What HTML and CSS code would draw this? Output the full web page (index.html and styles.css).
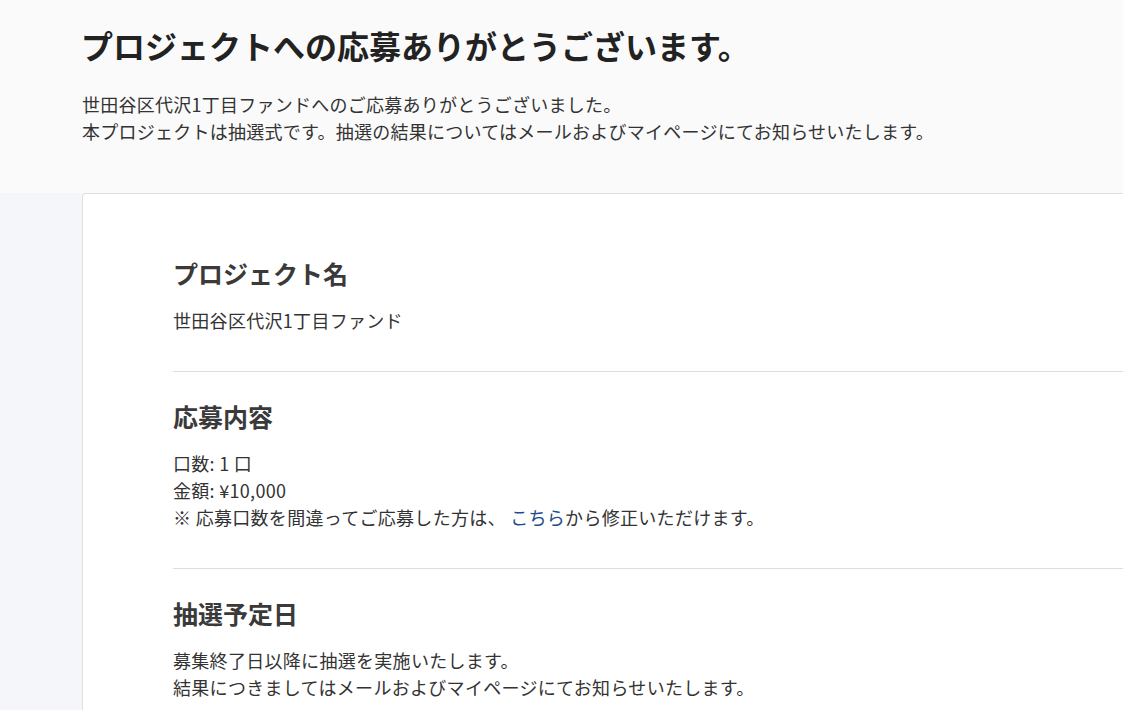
FILE: index.html
```html
<!DOCTYPE html>
<html lang="ja">
<head>
<meta charset="utf-8">
<title>応募完了</title>
<link rel="stylesheet" href="styles.css">
</head>
<body>
<header class="hero">
  <h1 class="hero-title">プロジェクトへの応募ありがとうございます。</h1>
  <p class="hero-text">世田谷区代沢1丁目ファンドへのご応募ありがとうございました。<br>本プロジェクトは抽選式です。抽選の結果についてはメールおよびマイページにてお知らせいたします。</p>
</header>
<main class="main">
  <div class="card">
    <section class="section section-first">
      <h2 class="section-title">プロジェクト名</h2>
      <p class="section-text">世田谷区代沢1丁目ファンド</p>
    </section>
    <section class="section">
      <h2 class="section-title">応募内容</h2>
      <p class="section-text">口数: 1 口<br>金額: ¥10,000<br>※ 応募口数を間違ってご応募した方は、 <a class="link" href="#">こちら</a>から修正いただけます。</p>
    </section>
    <section class="section">
      <h2 class="section-title">抽選予定日</h2>
      <p class="section-text">募集終了日以降に抽選を実施いたします。<br>結果につきましてはメールおよびマイページにてお知らせいたします。</p>
    </section>
  </div>
</main>
</body>
</html>
```

FILE: styles.css
```css
* { box-sizing: border-box; }
html, body { margin: 0; padding: 0; }
body {
  font-family: "Noto Sans CJK JP", "Noto Sans", sans-serif;
  background: #f5f6fa;
  color: #333;
  overflow: hidden;
}
.hero {
  background: #fafafa;
  padding: 23px 0 48px 81px;
}
.hero-title {
  margin: 0;
  font-size: 32px;
  line-height: 44px;
  font-weight: 700;
  color: #222;
}
.hero-text {
  margin: 24px 0 0 1px;
  font-size: 18px;
  line-height: 27px;
  letter-spacing: 0.25px;
  color: #333;
}
.main {
  padding-left: 82px;
}
.card {
  background: #fff;
  border: 1px solid #e0e0e0;
  border-right: none;
  border-radius: 4px 0 0 0;
  padding: 35px 0 40px 90px;
}
.section {
  padding: 26px 0 37px;
  border-bottom: 1px solid #dedede;
}
.section:last-child { border-bottom: none; }
.section-title {
  margin: 0 0 16px;
  font-size: 25px;
  line-height: 36px;
  font-weight: 700;
  color: #3a3a3a;
}
.section-text {
  margin: 0;
  font-size: 18px;
  line-height: 27px;
  letter-spacing: 0.3px;
  color: #333;
}
.link {
  color: #1d4e89;
  text-decoration: none;
}
```
